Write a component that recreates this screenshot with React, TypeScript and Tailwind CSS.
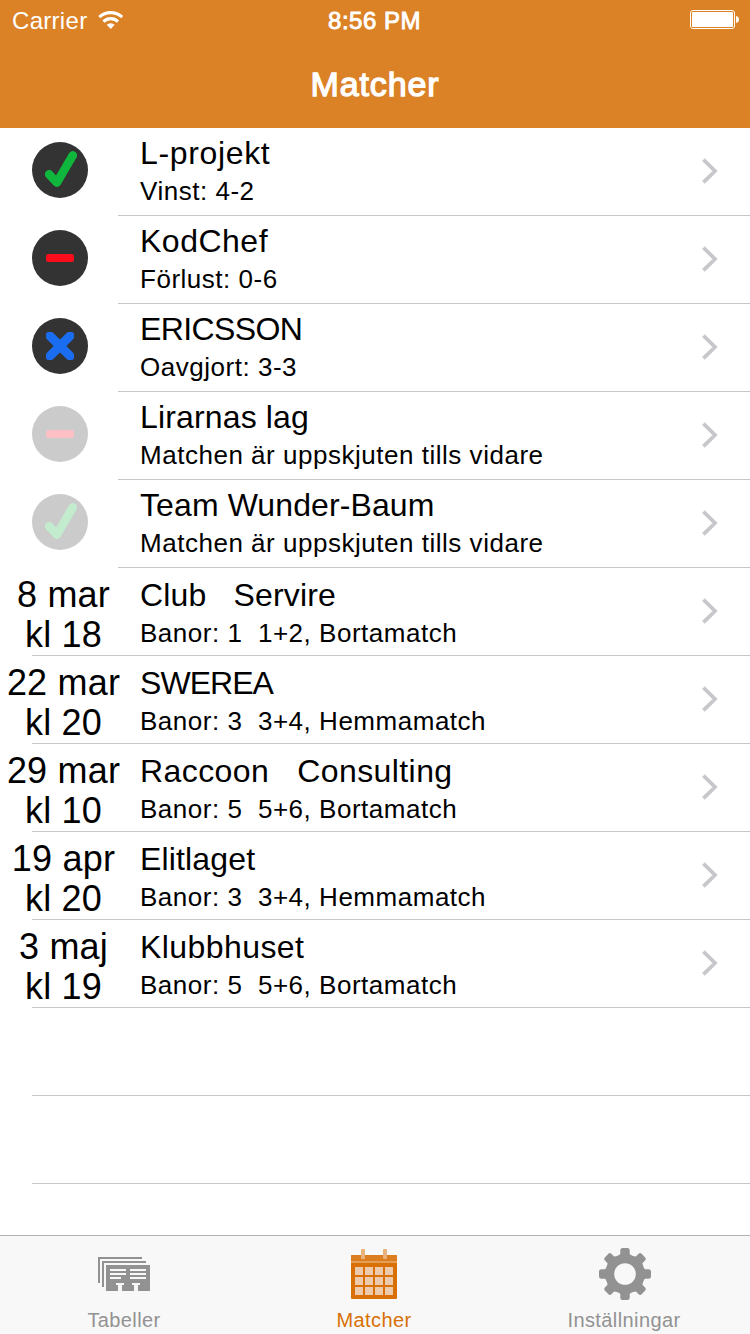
import React from "react";

type Result = "win" | "loss" | "draw";

interface PlayedMatch {
  team: string;
  detail: string;
  result: Result;
  tracking: string;
  faded?: boolean;
}

interface UpcomingMatch {
  team: string;
  detail: string;
  date: string;
  time: string;
  tracking: string;
}

const played: PlayedMatch[] = [
  { team: "L-projekt", detail: "Vinst: 4-2", result: "win", tracking: "tracking-[0.65px]" },
  { team: "KodChef", detail: "Förlust: 0-6", result: "loss", tracking: "tracking-[0.5px]" },
  { team: "ERICSSON", detail: "Oavgjort: 3-3", result: "draw", tracking: "tracking-[-0.6px]" },
  { team: "Lirarnas lag", detail: "Matchen är uppskjuten tills vidare", result: "loss", tracking: "tracking-[0.15px]", faded: true },
  { team: "Team Wunder-Baum", detail: "Matchen är uppskjuten tills vidare", result: "win", tracking: "tracking-[0.1px]", faded: true },
];

const upcoming: UpcomingMatch[] = [
  { team: "Club   Servire", detail: "Banor: 1  1+2, Bortamatch", date: "8 mar", time: "kl 18", tracking: "tracking-[0.15px]" },
  { team: "SWEREA", detail: "Banor: 3  3+4, Hemmamatch", date: "22 mar", time: "kl 20", tracking: "tracking-[-0.95px]" },
  { team: "Raccoon   Consulting", detail: "Banor: 5  5+6, Bortamatch", date: "29 mar", time: "kl 10", tracking: "tracking-[0.42px]" },
  { team: "Elitlaget", detail: "Banor: 3  3+4, Hemmamatch", date: "19 apr", time: "kl 20", tracking: "tracking-[0.15px]" },
  { team: "Klubbhuset", detail: "Banor: 5  5+6, Bortamatch", date: "3 maj", time: "kl 19", tracking: "tracking-[0.42px]" },
];

function ResultIcon({ result, faded }: { result: Result; faded?: boolean }) {
  return (
    <svg width="56" height="56" viewBox="0 0 56 56" className={faded ? "opacity-25" : ""}>
      <circle cx="28" cy="28" r="28" fill="#333333" />
      {result === "win" && (
        <path d="M17.2 32.4 L24.9 40.6 L40.8 13.4" fill="none" stroke="#0fb83c" strokeWidth="8.6" strokeLinecap="round" strokeLinejoin="round" />
      )}
      {result === "loss" && <rect x="14" y="24" width="28" height="8" rx="2.5" fill="#fb0d1b" />}
      {result === "draw" && (
        <path
          d="M16.5 14 H19.5 Q20.3 14 21 14.7 L28 21.6 L35 14.7 Q35.7 14 36.5 14 H39.5 Q42 14 42 16.5 V19.5 Q42 20.3 41.3 21 L34.4 28 L41.3 35 Q42 35.7 42 36.5 V39.5 Q42 42 39.5 42 H36.5 Q35.7 42 35 41.3 L28 34.4 L21 41.3 Q20.3 42 19.5 42 H16.5 Q14 42 14 39.5 V36.5 Q14 35.7 14.7 35 L21.6 28 L14.7 21 Q14 20.3 14 19.5 V16.5 Q14 14 16.5 14 Z"
          fill="#1a6cf0"
        />
      )}
    </svg>
  );
}

function Chevron() {
  return (
    <svg width="16" height="26" viewBox="0 0 16 26" className="mt-[30px] mr-[32px] shrink-0">
      <path d="M1.4 1.6 L13 13 L1.4 24.4" fill="none" stroke="#c7c7cc" strokeWidth="3.8" />
    </svg>
  );
}

function MatchText({ team, detail, tracking }: { team: string; detail: string; tracking: string }) {
  return (
    <div className="flex grow flex-col gap-1 whitespace-pre">
      <span className={`text-[32px] leading-[36px] ${tracking}`}>{team}</span>
      <span className="text-[26px] leading-[32px] tracking-[0.52px]">{detail}</span>
    </div>
  );
}

function PlayedRow({ match }: { match: PlayedMatch }) {
  return (
    <div className="flex h-[88px]">
      <div className="w-[118px] shrink-0 pt-[14px] pl-8">
        <ResultIcon result={match.result} faded={match.faded} />
      </div>
      <div className="flex grow border-b border-[#c8c7cc] pl-[22px]">
        <div className="flex grow pt-[7px]">
          <MatchText team={match.team} detail={match.detail} tracking={match.tracking} />
        </div>
        <Chevron />
      </div>
    </div>
  );
}

function Separator() {
  return <div className="ml-8 h-px shrink-0 bg-[#c8c7cc]" />;
}

function UpcomingRow({ match }: { match: UpcomingMatch }) {
  return (
    <div className="flex h-[88px] flex-col">
      <div className="flex h-[87px]">
        <div className="flex w-[127px] shrink-0 flex-col items-center pt-[7px] text-[36px] leading-[40px] tracking-[0.2px] whitespace-nowrap">
          <span>{match.date}</span>
          <span>{match.time}</span>
        </div>
        <div className="flex grow pt-[9px] pl-[13px]">
          <MatchText team={match.team} detail={match.detail} tracking={match.tracking} />
        </div>
        <Chevron />
      </div>
      <Separator />
    </div>
  );
}

function EmptyRow() {
  return (
    <div className="flex h-[88px] flex-col justify-end">
      <Separator />
    </div>
  );
}

function WifiIcon() {
  return (
    <svg width="26" height="20" viewBox="0 0 26 20">
      <path d="M12.7 19 L8.7 14.8 A5.8 5.8 0 0 1 16.7 14.8 Z" fill="#fff" />
      <path d="M5.4 11.6 A10.4 10.4 0 0 1 20 11.6" fill="none" stroke="#fff" strokeWidth="3.1" />
      <path d="M1.3 7.2 A16.4 16.4 0 0 1 24.1 7.2" fill="none" stroke="#fff" strokeWidth="3.1" />
    </svg>
  );
}

function BatteryIcon() {
  return (
    <svg width="50" height="20" viewBox="0 0 50 20">
      <rect x="0.5" y="0.5" width="44" height="18" rx="2.5" fill="none" stroke="#fff" />
      <rect x="2" y="2" width="41" height="15" rx="1" fill="#fff" />
      <path d="M46 6 C48.2 6.3 49 7.6 49 9.5 C49 11.4 48.2 12.7 46 13 Z" fill="#fff" />
    </svg>
  );
}

function Header() {
  return (
    <header className="flex h-[128px] shrink-0 flex-col bg-[#db8126] text-white">
      <div className="grid h-10 grid-cols-3 items-center">
        <div className="flex items-center gap-[11px] pl-3">
          <span className="text-[24px] leading-[42px] tracking-[0.3px]">Carrier</span>
          <div className="pb-[2px]">
            <WifiIcon />
          </div>
        </div>
        <span className="pr-px text-center text-[24px] leading-[42px] tracking-[0.5px] [-webkit-text-stroke:0.9px_white]">8:56 PM</span>
        <div className="flex justify-end pr-[10px] pb-[2px]">
          <BatteryIcon />
        </div>
      </div>
      <h1 className="text-center text-[34px] leading-[88px] tracking-[0.9px] [-webkit-text-stroke:1.3px_white]">Matcher</h1>
    </header>
  );
}

function TablesIcon() {
  return (
    <svg width="52" height="52" viewBox="0 0 52 52" shapeRendering="crispEdges">
      <path d="M0 9 H44 V11 H2 V35 H0 Z M4 13 H48 V15 H6 V39 H4 Z" fill="#929292" />
      <path d="M8 17 H52 V43 H8 Z" fill="#929292" />
      <path
        d="M12 21 H28 V23 H12 Z M12 25 H28 V27 H12 Z M12 29 H23 V31 H12 Z M32 21 H48 V23 H32 Z M32 25 H48 V27 H32 Z M32 29 H48 V31 H32 Z M18 35 H26 V37 H24 V43 H20 V37 H18 Z M34 35 H42 V37 H40 V43 H36 V37 H34 Z"
        fill="#f8f8f8"
      />
    </svg>
  );
}

const cellColumns = [4, 14, 24, 34];
const cellRows = [19, 29, 39];

function CalendarIcon() {
  return (
    <svg width="46" height="52" viewBox="0 0 46 52">
      <rect x="0" y="7" width="46" height="44" rx="1" fill="#d87005" />
      <path d="M1 7 H45 Q46 7 46 8 V13 H0 V8 Q0 7 1 7 Z" fill="#dc7e20" />
      <rect x="0" y="13" width="46" height="2" fill="#e49e58" />
      <rect x="10" y="1" width="4" height="10" rx="0.7" fill="#e9b27c" />
      <rect x="32" y="1" width="4" height="10" rx="0.7" fill="#e9b27c" />
      {cellRows.map((y) =>
        cellColumns.map((x) => <rect key={`${x}-${y}`} x={x} y={y} width="8" height="8" fill="#eccaab" />)
      )}
    </svg>
  );
}

const toothAngles = [0, 45, 90, 135, 180, 225, 270, 315];

function GearIcon() {
  return (
    <svg width="52" height="52" viewBox="0 0 52 52" className="translate-x-px">
      {toothAngles.map((angle) => (
        <path
          key={angle}
          d="M17.5 9.5 L21.3 6 V2 Q21.5 0 23.5 0 H28.5 Q30.5 0 30.7 2 V6 L34.5 9.5 Z"
          fill="#929292"
          transform={`rotate(${angle} 26 26)`}
        />
      ))}
      <circle cx="26" cy="26" r="15.3" fill="none" stroke="#929292" strokeWidth="9" />
    </svg>
  );
}

function Tab({ label, active, children }: { label: string; active?: boolean; children: React.ReactNode }) {
  return (
    <div className={`flex w-[250px] flex-col items-center pt-3 pr-[2px] ${active ? "text-[#d87005]" : "text-[#929292]"}`}>
      {children}
      <span className="mt-[10px] text-[20px] leading-[20px] tracking-[0.4px]">{label}</span>
    </div>
  );
}

export default function App() {
  return (
    <div className="flex h-[1334px] w-[750px] flex-col overflow-hidden bg-white font-['Liberation_Sans',Arial,sans-serif] text-black">
      <Header />
      <main className="grow">
        {played.map((match) => (
          <PlayedRow key={match.team} match={match} />
        ))}
        {upcoming.map((match) => (
          <UpcomingRow key={match.team} match={match} />
        ))}
        <EmptyRow />
        <EmptyRow />
      </main>
      <nav className="flex h-[99px] shrink-0 border-t border-[#b2b2b2] bg-[#f8f8f8]">
        <Tab label="Tabeller">
          <TablesIcon />
        </Tab>
        <Tab label="Matcher" active>
          <CalendarIcon />
        </Tab>
        <Tab label="Inställningar">
          <GearIcon />
        </Tab>
      </nav>
    </div>
  );
}
